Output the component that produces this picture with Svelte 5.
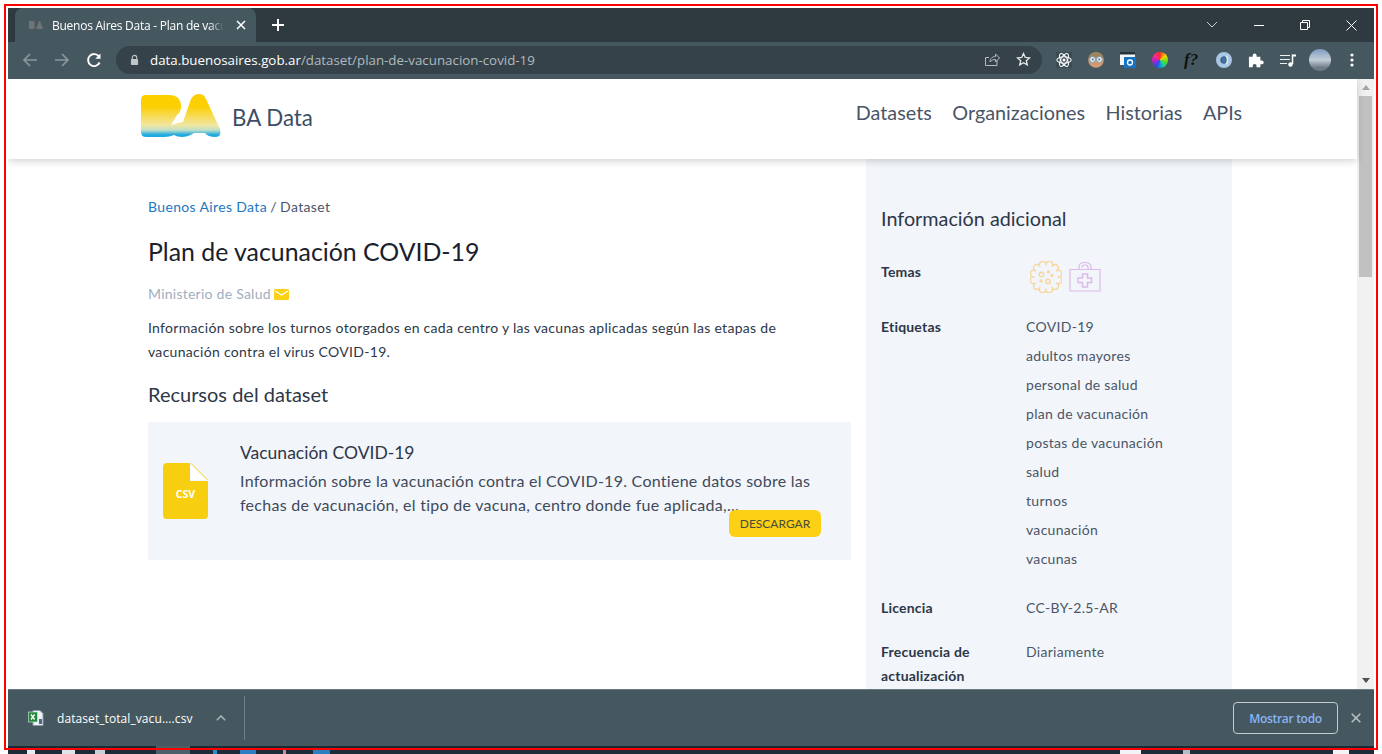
<script>
  const tags = ['COVID-19', 'adultos mayores', 'personal de salud', 'plan de vacunación', 'postas de vacunación', 'salud', 'turnos', 'vacunación', 'vacunas'];
  const navItems = ['Datasets', 'Organizaciones', 'Historias', 'APIs'];

  // tiny bits of the OS taskbar that peek out under the shelf
  const taskBits = [
    { x: 27, w: 8, c: '#e8ecef' },
    { x: 62, w: 13, c: '#dfe4e8' },
    { x: 95, w: 10, c: '#c9d0d6' },
    { x: 213, w: 4, c: '#2a8fc8' },
    { x: 240, w: 16, c: '#2a7fc0' },
    { x: 283, w: 3, c: '#d08a9a' },
    { x: 313, w: 17, c: '#2a7fc0' },
    { x: 1120, w: 21, c: '#f2f4f6' },
    { x: 1183, w: 7, c: '#b4bcc4' },
    { x: 1333, w: 16, c: '#f2f4f6' }
  ];

  // scalloped outline of the virus theme icon
  function scallop(cx, cy, r, lobes) {
    const pts = [];
    for (let i = 0; i < lobes; i++) {
      const a = (i / lobes) * Math.PI * 2;
      pts.push([cx + r * Math.cos(a), cy + r * Math.sin(a)]);
    }
    const lobe = ((2 * Math.PI * r) / lobes) * 0.56;
    let d = `M${pts[0][0].toFixed(2)} ${pts[0][1].toFixed(2)}`;
    for (let i = 1; i <= lobes; i++) {
      const p = pts[i % lobes];
      d += `A${lobe.toFixed(2)} ${lobe.toFixed(2)} 0 1 1 ${p[0].toFixed(2)} ${p[1].toFixed(2)}`;
    }
    return d + 'Z';
  }
  const virusPath = scallop(16, 16, 11.6, 12);
</script>

<div class="window">
  <div class="tabstrip">
    <div class="tab">
      <svg class="favicon" width="14" height="8" viewBox="0 0 14 8"><path d="M0 0h5l1 2-1 2 1 2-1 2H0zM7 8l3-8h1l3 8z" fill="#6f7477"/></svg>
      <span class="tab-title">Buenos Aires Data - Plan de vacu</span>
      <svg class="tab-close" width="10" height="10" viewBox="0 0 10 10"><path d="M1 1l8 8M9 1L1 9" stroke="#fff" stroke-width="1.5"/></svg>
    </div>
    <svg class="new-tab" width="14" height="14" viewBox="0 0 14 14"><path d="M7 1v12M1 7h12" stroke="#fff" stroke-width="2"/></svg>
    <div class="win-controls">
      <svg width="12" height="8" viewBox="0 0 12 8"><path d="M1 1l5 5 5-5" fill="none" stroke="#c9cfd2"/></svg>
      <svg width="10" height="10" viewBox="0 0 10 10"><path d="M0 5.5h10" stroke="#fff"/></svg>
      <svg width="10" height="10" viewBox="0 0 10 10"><path d="M.5 2.5h7v7h-7zM2.5 2.5v-2h7v7h-2" fill="none" stroke="#fff"/></svg>
      <svg width="11" height="11" viewBox="0 0 11 11"><path d="M.5.5l10 10M10.5.5l-10 10" stroke="#fff"/></svg>
    </div>
  </div>

  <div class="toolbar">
    <svg width="16" height="16" viewBox="0 0 16 16"><path d="M15 8H2M8 2L2 8l6 6" fill="none" stroke="#8a979e" stroke-width="1.7"/></svg>
    <svg width="16" height="16" viewBox="0 0 16 16"><path d="M1 8h13M8 2l6 6-6 6" fill="none" stroke="#8a979e" stroke-width="1.7"/></svg>
    <svg width="16" height="16" viewBox="0 0 16 16"><path d="M13.6 10.5A6 6 0 1 1 13 4.6" fill="none" stroke="#fff" stroke-width="1.9"/><path d="M14.5 1.5v5.2H9.3z" fill="#fff"/></svg>
    <div class="omnibox">
      <svg class="lock" width="9" height="12" viewBox="0 0 10 12"><path d="M2.5 5V3.4a2.5 2.5 0 0 1 5 0V5" fill="none" stroke="#bfc6ca" stroke-width="1.2"/><rect x="1" y="5" width="8" height="6.5" rx="1" fill="#bfc6ca"/></svg>
      <span class="url"><b>data.buenosaires.gob.ar</b>/dataset/plan-de-vacunacion-covid-19</span>
      <svg class="share" width="16" height="15" viewBox="0 0 16 15"><path d="M13 8.5v5H1.5v-8H5M6 10c0-4 3-5.500 5.500-5.500V2l4 4-4 4V7.500C9.500 7.500 7.500 8 6 10z" fill="none" stroke="#b4bcc1"/></svg>
      <svg class="star" width="15" height="15" viewBox="0 0 15 15"><path d="M7.500 1.500l1.800 4 4.200.4-3.200 2.800 1 4.200-3.800-2.200-3.800 2.200 1-4.200L1.500 5.900l4.200-.4z" fill="none" stroke="#e4e8ea" stroke-width="1.3"/></svg>
    </div>
    <div class="extensions">
      <svg width="16" height="16" viewBox="0 0 16 16"><rect width="16" height="16" fill="#3b4a52"/><g fill="none" stroke="#f2f6f8" stroke-width="1.100"><ellipse cx="8" cy="8" rx="7.200" ry="3.200"/><ellipse cx="8" cy="8" rx="7.200" ry="3.200" transform="rotate(60 8 8)"/><ellipse cx="8" cy="8" rx="7.200" ry="3.200" transform="rotate(120 8 8)"/></g><circle cx="8" cy="8" r="1.500" fill="#fff"/></svg>
      <svg width="16" height="16" viewBox="0 0 16 16"><circle cx="8" cy="8" r="7.800" fill="#d29a72"/><path d="M.6 6Q1.500.2 8 .2 14.500.2 15.400 6Z" fill="#9c8460"/><circle cx="4.600" cy="7.500" r="3" fill="#e4eef2" stroke="#7f97a3"/><circle cx="11.400" cy="7.500" r="3" fill="#e4eef2" stroke="#7f97a3"/><circle cx="4.800" cy="7.500" r="1" fill="#56707e"/><circle cx="11.200" cy="7.500" r="1" fill="#56707e"/></svg>
      <svg width="16" height="16" viewBox="0 0 16 16"><rect y="0" width="15" height="13" fill="#f4f6f7"/><rect y="0" width="15" height="2.500" fill="#26323a"/><rect x="4" y="5" width="12" height="11" fill="#1673c4"/><circle cx="10" cy="10.500" r="2.500" fill="none" stroke="#fff" stroke-width="1.300"/></svg>
      <span class="wheel"></span>
      <span class="fq">f?</span>
      <svg width="16" height="16" viewBox="0 0 16 16"><circle cx="8" cy="8" r="5.800" fill="none" stroke="#a9c7e4" stroke-width="4.400"/><ellipse cx="7.800" cy="8" rx="1.900" ry="3.800" fill="#3f73a6"/><path d="M10.500 3.500Q12.500 8 10.500 12.500" fill="none" stroke="#dce8f2" stroke-width="1.600"/></svg>
      <svg width="16" height="16" viewBox="0 0 16 16"><path d="M1 5h4V3.500a2 2 0 0 1 4 0V5h4v4h1.500a2 2 0 0 1 0 4H13v3H9v-1.500a2 2 0 0 0-4 0V16H1z" fill="#fff" transform="scale(.95)"/></svg>
      <svg width="16" height="16" viewBox="0 0 16 16"><path d="M0 3.500h10M0 7.500h10M0 11.500h7" stroke="#eef1f2" stroke-width="1.200"/><path d="M12.500 2.500v9.500" stroke="#fff" stroke-width="1.500"/><circle cx="10.500" cy="12.500" r="2.200" fill="#fff"/><path d="M12.500 2.500H16v2h-3.500z" fill="#fff"/></svg>
      <span class="avatar"></span>
      <svg width="4" height="16" viewBox="0 0 4 16"><circle cx="2" cy="3" r="1.600" fill="#fff"/><circle cx="2" cy="8" r="1.600" fill="#fff"/><circle cx="2" cy="13" r="1.600" fill="#fff"/></svg>
    </div>
  </div>

  <div class="viewport">
    <div class="page">
      <header class="site-header">
        <a class="brand" href="#top">
          <svg width="80" height="44" viewBox="0 0 80 44">
            <defs>
              <linearGradient id="ba" x1="0" y1="0" x2="0" y2="1">
                <stop offset="0.28" stop-color="#fbcf00"/>
                <stop offset="0.72" stop-color="#f2e6a0"/>
                <stop offset="0.84" stop-color="#bfe0c8"/>
                <stop offset="0.95" stop-color="#1fa9e1"/>
              </linearGradient>
            </defs>
            <path d="M0 6Q0 1 5 1H28Q40 1 40 13Q40 18 36 21L30 31 42 28 50 5Q53 0 58 0 63 0 65 5L79 35Q81 43 74 43 67 43 64 39H53Q47 43 41 43 36 43 33 41 28 43 24 43H5Q0 43 0 38Z" fill="url(#ba)"/>
          </svg>
          <span>BA Data</span>
        </a>
        <nav>
          {#each navItems as item}
            <a href="#top">{item}</a>
          {/each}
        </nav>
      </header>

      <div class="content">
        <main>
          <p class="crumbs"><a href="#top">Buenos Aires Data</a> / Dataset</p>
          <h1>Plan de vacunación COVID-19</h1>
          <p class="org">
            Ministerio de Salud
            <svg width="15" height="11" viewBox="0 0 15 11"><rect width="15" height="11" rx="1.500" fill="#fbd015"/><path d="M1 2l6.500 4L14 2" fill="none" stroke="#fff" stroke-width="1.200"/></svg>
          </p>
          <p class="desc">Información sobre los turnos otorgados en cada centro y las vacunas aplicadas según las etapas de vacunación contra el virus COVID-19.</p>
          <h2>Recursos del dataset</h2>
          <section class="resource">
            <svg class="file" width="45" height="56" viewBox="0 0 45 56">
              <path d="M4 0H27V18H45V52Q45 56 41 56H4Q0 56 0 52V4Q0 0 4 0Z" fill="#f8cf10"/>
              <path d="M28 0L45 17H28Z" fill="#f8cf10"/>
              <path d="M28 1V17H44" fill="#fff"/>
              <text x="22.500" y="35" text-anchor="middle" class="file-label">CSV</text>
            </svg>
            <div class="resource-body">
              <h3>Vacunación COVID-19</h3>
              <p>Información sobre la vacunación contra el COVID-19. Contiene datos sobre las fechas de vacunación, el tipo de vacuna, centro donde fue aplicada,...</p>
              <button type="button">DESCARGAR</button>
            </div>
          </section>
        </main>

        <aside>
          <h2>Información adicional</h2>
          <dl>
            <dt class="t-temas">Temas</dt>
            <dd class="themes">
              <svg width="32" height="32" viewBox="0 0 32 32" fill="none" stroke="#f7d7a0" stroke-width="1.400">
                <path d={virusPath}/>
                <circle cx="11.500" cy="13.500" r="2.200"/><circle cx="18" cy="20.500" r="2.200"/><circle cx="18.500" cy="11" r="1"/><circle cx="22" cy="14.500" r="1"/><circle cx="11" cy="20" r="1"/>
              </svg>
              <svg width="32" height="32" viewBox="0 0 32 32" fill="none" stroke="#d9bde8" stroke-width="1.200">
                <path d="M1 8.500H31V30H1ZM10 8.500V6Q10 1.500 16 1.500 22 1.500 22 6V8.500M13 6.500Q13 4 16 4 19 4 19 6.500V8.500"/>
                <path d="M13.500 13H18.500V17H22.500V21.500H18.500V26H13.500V21.500H9V17H13.500Z" stroke-width="1.500"/>
              </svg>
            </dd>
            <dt class="t-tags">Etiquetas</dt>
            <dd class="tags">
              {#each tags as tag}
                <span>{tag}</span>
              {/each}
            </dd>
            <dt>Licencia</dt>
            <dd class="plain">CC-BY-2.5-AR</dd>
            <dt>Frecuencia de actualización</dt>
            <dd class="plain">Diariamente</dd>
          </dl>
        </aside>
      </div>
    </div>

    <div class="scrollbar">
      <span class="arrow up"></span>
      <span class="thumb"></span>
      <span class="arrow down"></span>
    </div>
  </div>

  <div class="downloads">
    <svg class="xls" width="16" height="16" viewBox="0 0 16 16">
      <path d="M5 .5h7l3 3v12H5z" fill="#eef2f6" stroke="#8b98a8"/>
      <rect x=".5" y="2" width="9" height="10" fill="#1f8a3c" stroke="#d9efe0" stroke-width=".6"/>
      <path d="M3 4.500l3.600 5M6.600 4.500L3 9.500" stroke="#fff" stroke-width="1.300"/>
      <path d="M11 9h3v5h-3z" fill="#4a6a8a"/>
    </svg>
    <span class="filename">dataset_total_vacu....csv</span>
    <svg class="caret" width="10" height="6" viewBox="0 0 10 6"><path d="M.8 5.200L5 1l4.200 4.200" fill="none" stroke="#aab4b9" stroke-width="1.500"/></svg>
    <span class="divider"></span>
    <button type="button" class="show-all">Mostrar todo</button>
    <svg class="dl-close" width="10" height="10" viewBox="0 0 10 10"><path d="M.7.700l8.600 8.600M9.300.700L.7 9.300" stroke="#b8c0c4" stroke-width="1.600"/></svg>
  </div>

  <div class="taskbar">
    <span class="task-active"></span>
    {#each taskBits as bit}
      <span class="task-bit" style="left: {bit.x - 8}px; width: {bit.w}px; background: {bit.c}"></span>
    {/each}
  </div>
</div>

<div class="annotation"></div>

<style>
  :global(body) {
    background: #fff;
    overflow: hidden;
  }

  .window {
    height: 754px;
    box-sizing: border-box;
    padding: 8px 8px 0;
    display: flex;
    flex-direction: column;
    overflow: hidden;
    font-family: "Lato", "Noto Sans", sans-serif;
  }

  .annotation {
    position: absolute;
    left: 4px;
    top: 4px;
    width: 1374px;
    height: 746px;
    box-sizing: border-box;
    border: 2px solid #f00;
    pointer-events: none;
  }

  /* browser chrome */
  .tabstrip {
    height: 34px;
    flex-shrink: 0;
    background: #2e3a40;
    display: flex;
    align-items: flex-end;
    padding-left: 7px;
    font-family: "Open Sans", sans-serif;
  }

  .tab {
    width: 241px;
    height: 34px;
    box-sizing: border-box;
    background: #46585f;
    border-radius: 8px 8px 0 0;
    display: flex;
    align-items: center;
    padding: 0 10px 0 14px;
    color: #fff;
    font-size: 12px;
    letter-spacing: -0.25px;
  }

  .favicon { flex-shrink: 0; margin-right: 9px; }

  .tab-title {
    flex: 1;
    white-space: nowrap;
    -webkit-mask-image: linear-gradient(90deg, #000 90%, transparent 98%);
    mask-image: linear-gradient(90deg, #000 90%, transparent 98%);
  }

  .tab-close { flex-shrink: 0; margin-left: 9px; }

  .new-tab { margin: 0 0 10px 15px; }

  .win-controls {
    margin-left: auto;
    margin-right: 17px;
    align-self: center;
    display: flex;
    align-items: center;
    gap: 36px;
  }

  .toolbar {
    height: 37px;
    flex-shrink: 0;
    background: #46585f;
    box-sizing: border-box;
    display: flex;
    align-items: center;
    padding: 0 0 2px 14px;
    gap: 16px;
  }

  .omnibox {
    width: 926px;
    height: 28px;
    margin-left: -2px;
    box-sizing: border-box;
    border-radius: 14px;
    background: #364249;
    display: flex;
    align-items: center;
    padding: 0 11px 0 14px;
    font-family: "Open Sans", sans-serif;
    font-size: 13.330px;
    color: #b0babf;
  }

  .url { margin-left: 11px; white-space: nowrap; }
  .url b { font-weight: 400; color: #fff; }
  .share { margin-left: auto; margin-right: 16px; }

  .extensions {
    margin-left: -2px;
    display: flex;
    align-items: center;
    gap: 16px;
  }

  .wheel {
    width: 16px;
    height: 16px;
    border-radius: 50%;
    background: conic-gradient(#ff2a2a, #ffd400, #5ae01e, #12c8b0, #1e50f0, #b020d0, #ff2a8a, #ff2a2a);
  }

  .fq {
    width: 16px;
    font: italic 700 17px "Liberation Serif", serif;
    color: #111;
    white-space: nowrap;
  }

  .avatar {
    width: 22px;
    height: 22px;
    margin: 0 3px 0 -3px;
    border-radius: 50%;
    background: linear-gradient(#7f9cc0, #c3ced8 50%, #6f7886 85%);
  }

  /* page */
  .viewport {
    height: 610px;
    flex-shrink: 0;
    display: flex;
    overflow: hidden;
    background: #fff;
  }

  .page {
    flex: 1;
    min-width: 0;
  }

  .site-header {
    height: 80px;
    box-sizing: border-box;
    padding: 0 115px 14px 133px;
    display: flex;
    align-items: center;
    justify-content: space-between;
    background: #fff;
    box-shadow: 0 2px 8px rgba(0, 0, 0, 0.18);
    position: relative;
  }

  .brand {
    display: flex;
    align-items: center;
    gap: 11px;
    margin-top: 8px;
    color: #3c4e66;
    font-size: 22.300px;
    text-decoration: none;
  }

  .brand span { margin-top: 3px; }

  nav {
    display: flex;
    gap: 20.500px;
  }

  nav a {
    color: #4a5568;
    font-size: 19.800px;
    text-decoration: none;
  }

  .content {
    display: flex;
    padding-left: 140px;
  }

  main {
    width: 703px;
    padding-top: 39px;
  }

  .crumbs {
    margin: 0;
    font-size: 14px;
    line-height: 18px;
    letter-spacing: 0.35px;
    word-spacing: -0.7px;
    color: #4a5568;
  }

  .crumbs a {
    color: #1c78c0;
    word-spacing: 0;
    text-decoration: none;
  }

  h1 {
    margin: 17px 0 0;
    font-size: 24.850px;
    line-height: 36px;
    font-weight: 400;
    color: #1a202c;
  }

  .org {
    margin: 15px 0 0;
    font-size: 14px;
    line-height: 20px;
    letter-spacing: 0.25px;
    color: #a0aec0;
    display: flex;
    align-items: center;
    gap: 3px;
  }

  .desc {
    margin: 12px 0 0;
    font-size: 14px;
    line-height: 24px;
    letter-spacing: 0.3px;
    color: #2d3748;
  }

  main h2 {
    margin: 16px 0 0;
    font-size: 20px;
    line-height: 28px;
    font-weight: 400;
    color: #2d3748;
  }

  .resource {
    margin-top: 14px;
    height: 138px;
    box-sizing: border-box;
    background: #f2f5f9;
    padding: 19px 30px 0 15px;
    display: flex;
    gap: 32px;
    position: relative;
  }

  .file { margin-top: 22px; flex-shrink: 0; }

  .file-label {
    font: 700 10.500px "Open Sans", sans-serif;
    fill: #fff;
  }

  .resource-body h3 {
    margin: 0;
    font-size: 17.500px;
    line-height: 24px;
    font-weight: 400;
    color: #2d3748;
  }

  .resource-body p {
    margin: 4px 0 0;
    font-size: 16px;
    line-height: 24px;
    letter-spacing: 0.27px;
    color: #3f4a5c;
  }

  .resource button {
    position: absolute;
    right: 30px;
    top: 88px;
    width: 92px;
    height: 27px;
    border: 0;
    border-radius: 6px;
    background: #fbd015;
    color: #4a4a3a;
    font: 12px "Lato", sans-serif;
  }

  aside {
    margin-left: 15px;
    width: 366px;
    height: 530px;
    box-sizing: border-box;
    padding: 45px 15px 0;
    background: #f2f5f9;
    overflow: hidden;
  }

  aside h2 {
    margin: 0;
    font-size: 19.800px;
    line-height: 28px;
    font-weight: 400;
    color: #2d3748;
  }

  dl {
    margin: 28px 0 0;
    display: grid;
    grid-template-columns: 145px 1fr;
    font-size: 14px;
    line-height: 24px;
    letter-spacing: 0.3px;
    color: #4a5568;
  }

  dt {
    font-weight: 700;
    letter-spacing: 0.2px;
    color: #2d3748;
    padding-right: 30px;
  }

  dd { margin: 0; }

  .themes {
    height: 42px;
    display: flex;
    gap: 7px;
    margin-left: 4px;
    margin-top: 1px;
    margin-bottom: 12px;
  }

  .t-temas { height: 55px; }

  .tags {
    display: flex;
    flex-direction: column;
    gap: 5px;
    padding-bottom: 25px;
  }

  .plain { padding-bottom: 20px; }

  /* scrollbar */
  .scrollbar {
    width: 17px;
    flex-shrink: 0;
    background: #f1f1f1;
    display: flex;
    flex-direction: column;
    align-items: center;
  }

  .thumb {
    width: 13px;
    height: 181px;
    margin-top: 6px;
    background: #c1c1c1;
  }

  .arrow {
    width: 0;
    height: 0;
    border-left: 4px solid transparent;
    border-right: 4px solid transparent;
  }

  .arrow.up {
    margin-top: 6px;
    border-bottom: 5px solid #a3a3a3;
  }

  .arrow.down {
    margin-top: auto;
    margin-bottom: 6px;
    border-top: 5px solid #505050;
  }

  /* download shelf */
  .downloads {
    height: 57px;
    flex-shrink: 0;
    box-sizing: border-box;
    background: #46585f;
    border-top: 1px solid #6a7a82;
    display: flex;
    align-items: center;
    padding: 0 13px 0 20px;
    color: #fff;
    font-family: "Open Sans", sans-serif;
    font-size: 12px;
  }

  .filename {
    margin-left: 13px;
    letter-spacing: 0.08px;
    white-space: nowrap;
  }

  .caret { margin-left: 23px; }

  .divider {
    width: 1px;
    height: 44px;
    margin-left: 18px;
    background: #6f7f87;
  }

  .show-all {
    margin-left: auto;
    width: 105px;
    height: 32px;
    box-sizing: border-box;
    border: 1px solid #c4ccd0;
    border-radius: 4px;
    background: transparent;
    color: #8ab4f8;
    font: 600 12px "Open Sans", sans-serif;
    letter-spacing: -0.3px;
  }

  .dl-close { margin-left: 13px; }

  .taskbar {
    height: 8px;
    flex-shrink: 0;
    background: #1c2b38;
    position: relative;
  }

  .task-active {
    position: absolute;
    left: 148px;
    top: 0;
    width: 34px;
    height: 8px;
    background: #4b6068;
  }

  .task-bit {
    position: absolute;
    bottom: 0;
    height: 4px;
  }
</style>
